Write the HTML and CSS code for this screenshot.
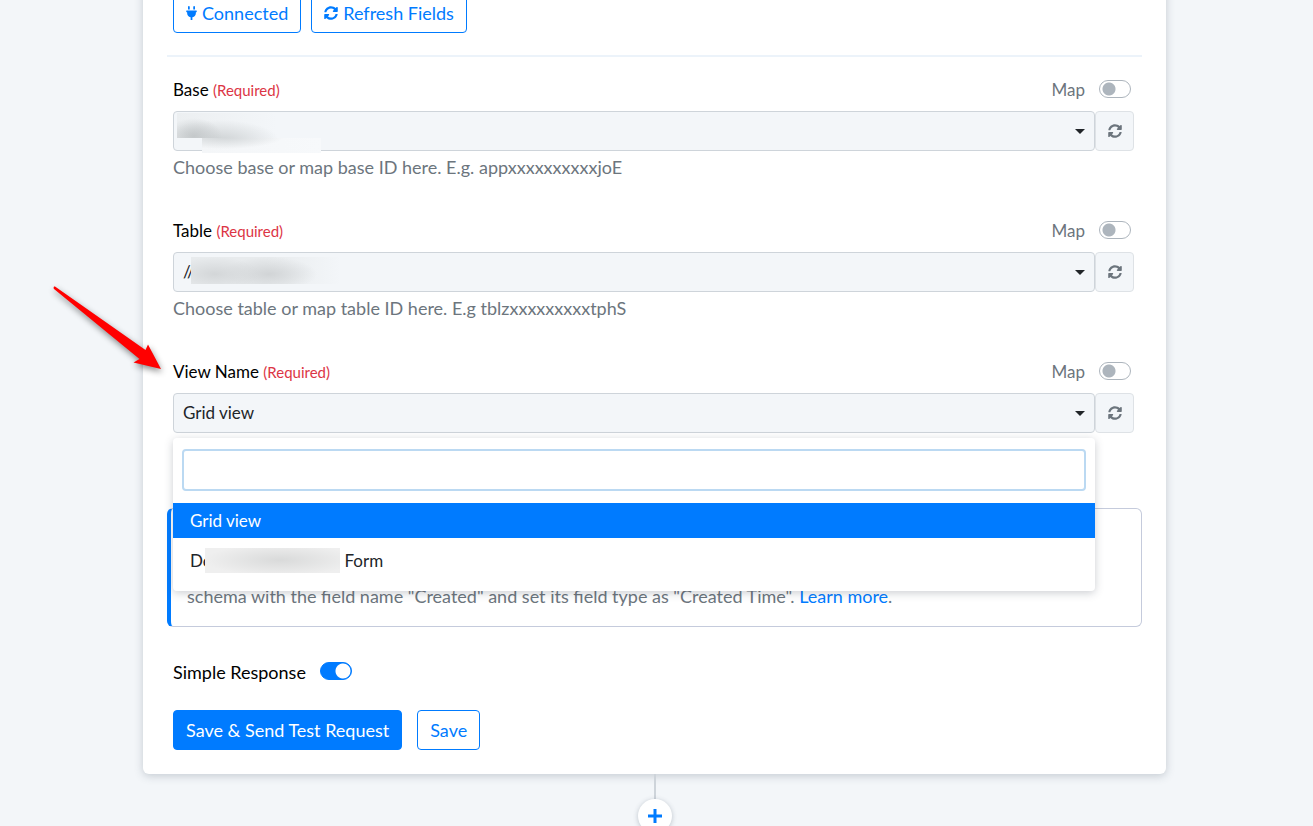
FILE: index.html
```html
<!DOCTYPE html>
<html lang="en">
<head>
<meta charset="utf-8">
<title>Action setup</title>
<link rel="stylesheet" href="styles.css">
</head>
<body>
<svg class="defs" aria-hidden="true">
  <symbol id="sync" viewBox="0 0 512 512"><path fill="currentColor" d="M370.72 133.28C339.458 104.008 298.888 87.962 255.848 88c-77.458.068-144.328 53.178-162.791 126.85-1.344 5.363-6.122 9.15-11.651 9.15H24.103c-7.498 0-13.194-6.807-11.807-14.176C33.933 94.924 134.813 8 256 8c66.448 0 126.791 26.136 171.315 68.685L463.03 40.97C478.149 25.851 504 36.559 504 57.941V192c0 13.255-10.745 24-24 24H345.941c-21.382 0-32.09-25.851-16.971-40.971l41.75-41.749zM32 296h134.059c21.382 0 32.09 25.851 16.971 40.971l-41.75 41.75c31.262 29.273 71.835 45.319 114.876 45.28 77.418-.07 144.315-53.144 162.787-126.849 1.344-5.363 6.122-9.15 11.651-9.15h57.304c7.498 0 13.194 6.807 11.807 14.176C478.067 417.076 377.187 504 256 504c-66.448 0-126.791-26.136-171.315-68.685L48.97 471.03C33.851 486.149 8 475.441 8 454.059V320c0-13.255 10.745-24 24-24z"/></symbol>
  <symbol id="plug" viewBox="0 0 384 512"><path fill="currentColor" d="M320 32a32 32 0 0 0-64 0v96h64zm48 128H16A16 16 0 0 0 0 176v32a16 16 0 0 0 16 16h16v32a160.07 160.07 0 0 0 128 156.8V512h64v-99.2A160.07 160.07 0 0 0 352 256v-32h16a16 16 0 0 0 16-16v-32a16 16 0 0 0-16-16zM128 32a32 32 0 0 0-64 0v96h64z"/></symbol>
</svg>
<main class="card">
  <div class="toolbar">
    <button class="btn" type="button"><svg class="plug"><use href="#plug"/></svg>Connected</button>
    <button class="btn" type="button"><svg class="sync"><use href="#sync"/></svg>Refresh Fields</button>
  </div>
  <hr class="rule">
  <div class="fields">
    <section class="field">
      <div class="head">
        <label class="name" for="base">Base <small class="required">(Required)</small></label>
        <label class="map">Map <input class="switch" type="checkbox"></label>
      </div>
      <div class="control">
        <div class="picker">
          <select class="select" id="base"><option></option></select>
          <span class="smudge smudge-base"></span><span class="smudge smudge-base-low"></span>
        </div>
        <button class="reload" type="button" aria-label="Reload"><svg class="sync"><use href="#sync"/></svg></button>
      </div>
      <p class="help">Choose base or map base ID here. E.g. appxxxxxxxxxxjoE</p>
    </section>
    <section class="field">
      <div class="head">
        <label class="name" for="table">Table <small class="required">(Required)</small></label>
        <label class="map">Map <input class="switch" type="checkbox"></label>
      </div>
      <div class="control">
        <div class="picker">
          <select class="select" id="table"><option>//</option></select>
          <span class="smudge smudge-table"></span>
        </div>
        <button class="reload" type="button" aria-label="Reload"><svg class="sync"><use href="#sync"/></svg></button>
      </div>
      <p class="help">Choose table or map table ID here. E.g tblzxxxxxxxxxtphS</p>
    </section>
    <section class="field">
      <div class="head">
        <label class="name" for="view">View Name <small class="required">(Required)</small></label>
        <label class="map">Map <input class="switch" type="checkbox"></label>
      </div>
      <div class="control">
        <div class="picker">
          <select class="select" id="view"><option>Grid view</option></select>
          <div class="menu">
            <input class="search" type="text" aria-label="Search views">
            <ul class="options">
              <li class="option active">Grid view</li>
              <li class="option">Do<span class="smudge-inline"></span>Form</li>
            </ul>
          </div>
        </div>
        <button class="reload" type="button" aria-label="Reload"><svg class="sync"><use href="#sync"/></svg></button>
      </div>
    </section>
  </div>
  <p class="notice">schema with the field name "Created" and set its field type as "Created Time". <a class="link" href="#">Learn more</a>.</p>
  <div class="footer">
    <label class="simple">Simple Response <input class="switch" type="checkbox" checked></label>
    <div class="actions">
      <button class="btn primary" type="button">Save &amp; Send Test Request</button>
      <button class="btn" type="button">Save</button>
    </div>
  </div>
</main>
<div class="connector">
  <span class="line"></span>
  <button class="add" type="button" aria-label="Add step"><svg class="plus" viewBox="0 0 16 16"><path d="M8 1v14M1 8h14" stroke="currentColor" stroke-width="3"/></svg></button>
</div>
<svg class="arrow" viewBox="0 0 120 100" aria-hidden="true"><path fill="#f00" d="M14 16.500Q13 18 14 19L99.500 89 93.500 92.500 121 99 108 74.500 105.500 80 15 16.500z"/></svg>
</body>
</html>
```
FILE: styles.css
```css
* { box-sizing: border-box; }
body {
  margin: 0;
  height: 100vh;
  overflow: hidden;
  padding: 0 147px 0 143px;
  background: #f3f6f9;
  color: #000;
  font: 18px/24px Lato, "Open Sans", sans-serif;
}
button, select, input { font: inherit; }
.defs { position: absolute; width: 0; height: 0; }
.card {
  margin-top: -20px;
  padding: 13px 24px 24px;
  background: #fff;
  border-radius: 6px;
  box-shadow: 0 2px 8px rgba(60, 75, 95, .25);
}
.toolbar, .actions { display: flex; }
.toolbar { gap: 10px; padding-left: 6px; }
.btn {
  height: 40px;
  padding: 0 12px;
  display: flex;
  align-items: center;
  gap: 5px;
  border: 1px solid #007bff;
  border-radius: 4px;
  background: #fff;
  color: #007bff;
}
.btn.primary { background: #007bff; color: #fff; }
.plug { width: 11px; height: 14px; }
.sync { width: 14px; height: 14px; }
.rule { height: 2px; margin: 22px 0 21px; border: 0; background: #ecf3fa; }
.fields { padding: 0 8px 0 6px; display: grid; gap: 40px; }
.head { display: flex; justify-content: space-between; align-items: center; height: 24px; margin-bottom: 9px; font-size: 17px; }
.required { font-size: 15px; color: #dc3545; }
.map { display: flex; align-items: center; gap: 14px; padding-right: 3px; color: #6c757d; }
.switch {
  appearance: none;
  width: 32px;
  height: 18px;
  margin: 0 0 2px;
  border: 1px solid #adb5bd;
  border-radius: 9px;
  background: radial-gradient(circle at 9px 8px, #adb5bd 6px, transparent 7px) #fff;
}
.switch:checked { border-color: #007bff; background: radial-gradient(circle at 22px 8px, #fff 7px, transparent 8px) #007bff; }
.control { display: flex; }
.picker { position: relative; flex: 1; }
.picker::after {
  content: "";
  position: absolute;
  right: 10px;
  top: 18px;
  border: 5px solid transparent;
  border-top-color: #212529;
  border-bottom: 0;
}
.select {
  appearance: none;
  display: block;
  width: 100%;
  height: 40px;
  padding: 0 9px;
  border: 1px solid #ced4da;
  border-radius: 4px;
  background: #f3f6f9;
  color: #212529;
  font-size: 17px;
}
.reload {
  width: 39px;
  padding: 0;
  display: grid;
  place-items: center;
  border: 1px solid #dee2e6;
  border-radius: 4px;
  background: #f3f6f9;
  color: #6c757d;
}
.help { margin: 4px 0 0; color: #6c757d; }
.smudge { position: absolute; }
.smudge-base {
  left: 4px; top: 2px; width: 100px; height: 25px;
  background: radial-gradient(ellipse 28px 18px at 17px 23px, #c4c8ca, transparent), radial-gradient(ellipse 60px 20px at 42px 27px, #cfd3d5, transparent), linear-gradient(90deg, #eceff1, #f3f6f9);
}
.smudge-base-low {
  left: 29px; top: 27px; width: 119px; height: 15px;
  background: radial-gradient(ellipse 60px 13px at 22px -2px, #cfd3d5, transparent), linear-gradient(90deg, #f4f6f8, #f7f9fb);
}
.smudge-table {
  left: 18px; top: 5px; width: 150px; height: 27px;
  background: radial-gradient(ellipse 45px 17px at 24px 17px, #d3d6d8, transparent), radial-gradient(ellipse 48px 17px at 78px 17px, #d1d4d6, transparent), linear-gradient(90deg, #e8ebed 50%, #f3f6f9);
}
.menu {
  position: absolute;
  z-index: 2;
  top: 45px;
  left: 0;
  width: 100%;
  padding: 11px 0 13px;
  border-radius: 4px;
  background: #fff;
  box-shadow: 0 2px 8px rgba(50, 60, 75, .25);
}
.search {
  display: block;
  width: calc(100% - 18px);
  height: 42px;
  margin: 0 9px 12px;
  padding: 0 10px;
  border: 2px solid #bbd9f2;
  border-radius: 4px;
  background: #fff;
}
.options { margin: 0; padding: 0; list-style: none; display: grid; gap: 5px; font-size: 17px; }
.option { height: 35px; padding: 0 17px; display: flex; align-items: center; color: #212529; }
.option.active { background: #007bff; color: #fff; }
.smudge-inline {
  width: 135px;
  height: 25px;
  margin: 0 4px 0 -7px;
  background: radial-gradient(ellipse 75px 16px at 75px 12px, #d9dada, transparent), #efefef;
}
.notice {
  margin: 75px 0 33px;
  padding: 75px 16px 18px;
  border: 1px solid #c5cbdc;
  border-left: 4px solid #007bff;
  border-radius: 6px;
  color: #6c757d;
}
.link { color: #007bff; text-decoration: none; }
.footer { padding-left: 6px; }
.simple { display: flex; align-items: center; gap: 14px; }
.actions { gap: 15px; margin-top: 26px; }
.connector { display: flex; flex-direction: column; align-items: center; }
.line { width: 2px; height: 25px; background: #ced4da; }
.add {
  width: 34px;
  height: 34px;
  padding: 0;
  display: grid;
  place-items: center;
  border: 0;
  border-radius: 50%;
  background: #fff;
  color: #007bff;
  box-shadow: 0 1px 5px rgba(60, 75, 95, .3);
}
.plus { width: 16px; height: 16px; }
.arrow {
  position: absolute;
  z-index: 3;
  left: 40px;
  top: 270px;
  width: 120px;
  height: 100px;
  overflow: visible;
  filter: drop-shadow(1px 3px 3px rgba(0, 0, 0, .45));
}
```
